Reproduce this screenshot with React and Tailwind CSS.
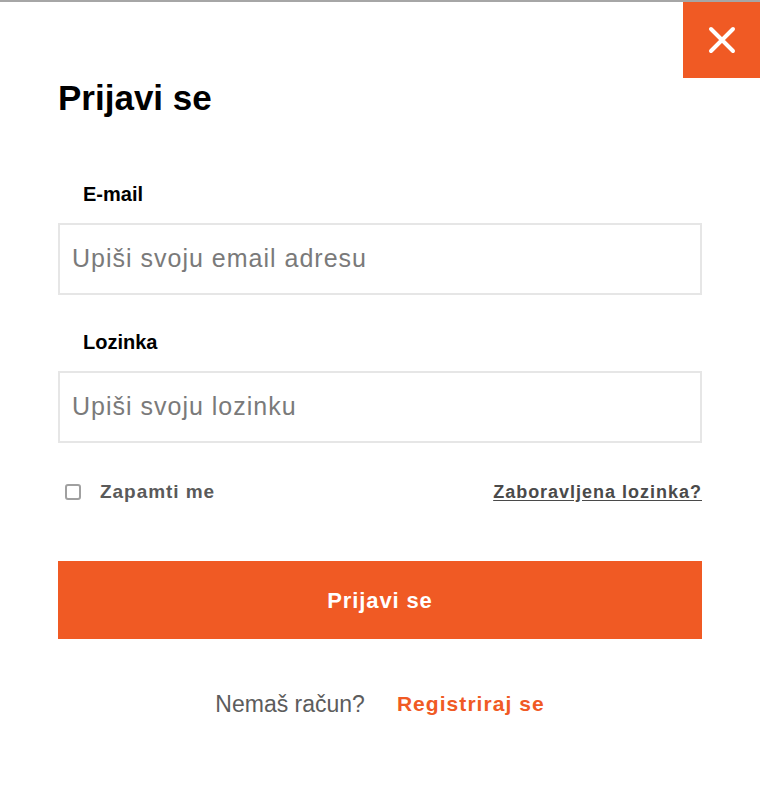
import React from 'react';

const sans = { fontFamily: '"Liberation Sans", Arial, sans-serif' };

export default function App() {
  return (
    <div
      className="relative w-[760px] h-[795px] bg-white border-t-2 border-[#a6a6a6] overflow-hidden"
      style={sans}
    >
      {/* Close button */}
      <button className="absolute top-0 right-0 w-[77px] h-[76px] bg-[#f05a24] flex items-center justify-center">
        <svg width="28" height="28" viewBox="0 0 28 28" fill="none">
          <path d="M3 3L25 25M25 3L3 25" stroke="white" strokeWidth="4" strokeLinecap="round" />
        </svg>
      </button>

      <div className="px-[58px] pt-[78px]">
        <h1 className="text-[35px] leading-none font-bold text-black">Prijavi se</h1>

        {/* Email */}
        <label className="block mt-[69px] pl-[25px] text-[20px] leading-none font-bold text-black">
          E-mail
        </label>
        <div className="mt-[19px] h-[72px] border-2 border-[#e6e6e6] flex items-center pl-[12px]">
          <span className="text-[25px] tracking-[1px] text-[#7a7a7a]">Upiši svoju email adresu</span>
        </div>

        {/* Password */}
        <label className="block mt-[37px] pl-[25px] text-[20px] leading-none font-bold text-black">
          Lozinka
        </label>
        <div className="mt-[19px] h-[72px] border-2 border-[#e6e6e6] flex items-center pl-[12px]">
          <span className="text-[25px] tracking-[1px] text-[#7a7a7a]">Upiši svoju lozinku</span>
        </div>

        {/* Remember / forgot */}
        <div className="mt-[39px] h-[20px] flex items-center justify-between">
          <div className="flex items-center">
            <span className="ml-[7px] w-[16px] h-[16px] border-2 border-[#a0a0a0] rounded-[3px] bg-white" />
            <span className="ml-[19px] text-[19px] font-bold tracking-[0.05em] text-[#5a5a5a]">Zapamti me</span>
          </div>
          <a className="text-[18px] font-bold tracking-[0.055em] text-[#4a4a4a] underline underline-offset-2">
            Zaboravljena lozinka?
          </a>
        </div>

        {/* Submit */}
        <button className="mt-[59px] w-full h-[78px] bg-[#f05a24] text-white text-[22px] font-bold tracking-[0.04em]">
          Prijavi se
        </button>

        {/* Register */}
        <div className="mt-[53px] flex items-center justify-center gap-[32px] text-[23px] leading-[24px]">
          <span className="text-[#5c5c5c]">Nemaš račun?</span>
          <a className="text-[#f05a24] font-bold text-[21px] tracking-[0.05em]">Registriraj se</a>
        </div>
      </div>
    </div>
  );
}
